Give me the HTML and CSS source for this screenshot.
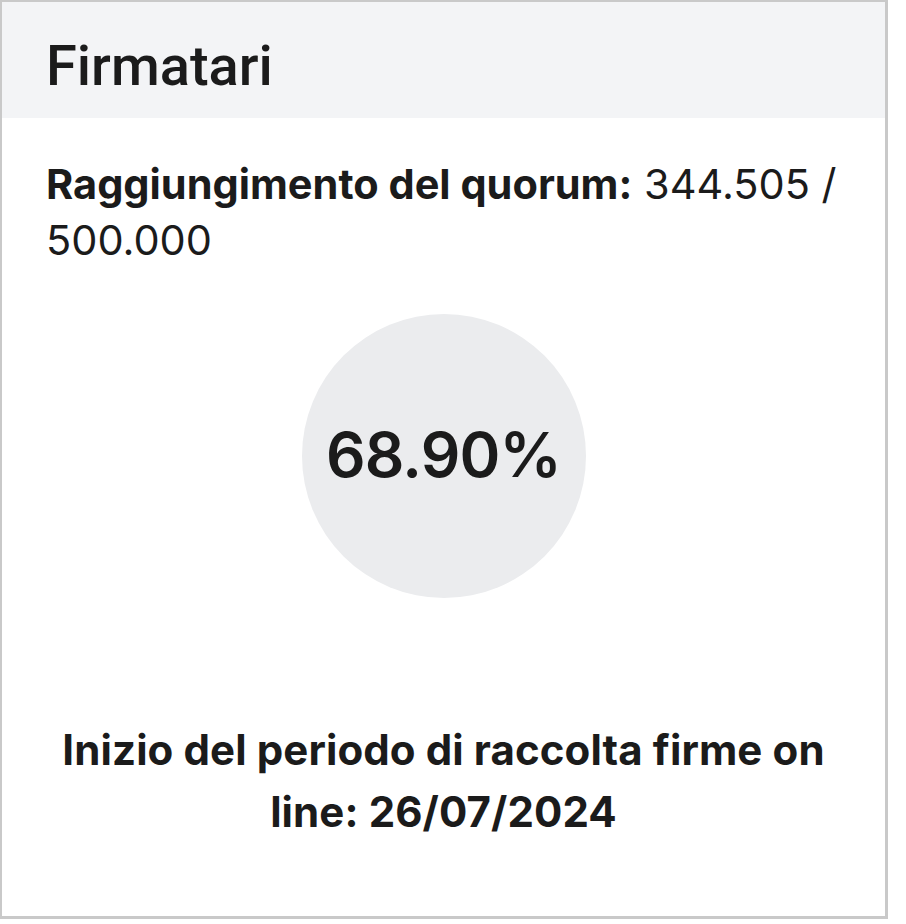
FILE: index.html
```html
<!DOCTYPE html>
<html lang="it">
<head>
<meta charset="utf-8">
<title>Firmatari</title>
<link rel="stylesheet" href="styles.css">
</head>
<body>
<div class="card">
  <div class="card-header">
    <h2 class="card-title">Firmatari</h2>
  </div>
  <div class="card-body">
    <p class="quorum"><strong>Raggiungimento del quorum:</strong> 344.505 / 500.000</p>
    <div class="circle-wrap">
      <div class="circle"><span class="percent">68.90%</span></div>
    </div>
    <p class="start">Inizio del periodo di raccolta firme on line: 26/07/2024</p>
  </div>
</div>
</body>
</html>
```

FILE: styles.css
```css
html, body {
  margin: 0;
  padding: 0;
  background: #ffffff;
}

body {
  font-family: Inter, "Noto Sans", sans-serif;
  color: #1b1b1b;
}

.card {
  width: 888px;
  height: 919px;
  box-sizing: border-box;
  border: 3px solid #c9c9c9;
  border-left-width: 2px;
  border-top-width: 2px;
  display: flex;
  flex-direction: column;
}

.card-header {
  height: 116px;
  box-sizing: border-box;
  background: #f3f4f6;
  padding: 12px 0 0 44px;
  display: flex;
  align-items: center;
}

.card-title {
  margin: 0;
  font-family: Roboto, "Noto Sans", sans-serif;
  font-weight: 500;
  font-size: 56px;
  line-height: 1;
  color: #1b1b1b;
}

.card-body {
  padding: 38px 20px 0 44px;
  display: flex;
  flex-direction: column;
}

.quorum {
  margin: 0;
  font-size: 41.5px;
  line-height: 56px;
  font-weight: 400;
}

.quorum strong {
  font-weight: 700;
}

.circle-wrap {
  display: flex;
  justify-content: center;
  margin-top: 46px;
  padding-right: 24px;
}

.circle {
  width: 284px;
  height: 284px;
  border-radius: 50%;
  background: #ebecee;
  display: flex;
  align-items: center;
  justify-content: center;
}

.percent {
  font-size: 62px;
  font-weight: 600;
  letter-spacing: -0.8px;
  margin-top: -4px;
}

.start {
  margin: 121px 24px 0 0;
  text-align: center;
  font-size: 42px;
  line-height: 62px;
  font-weight: 700;
  letter-spacing: 0.1px;
}
```
